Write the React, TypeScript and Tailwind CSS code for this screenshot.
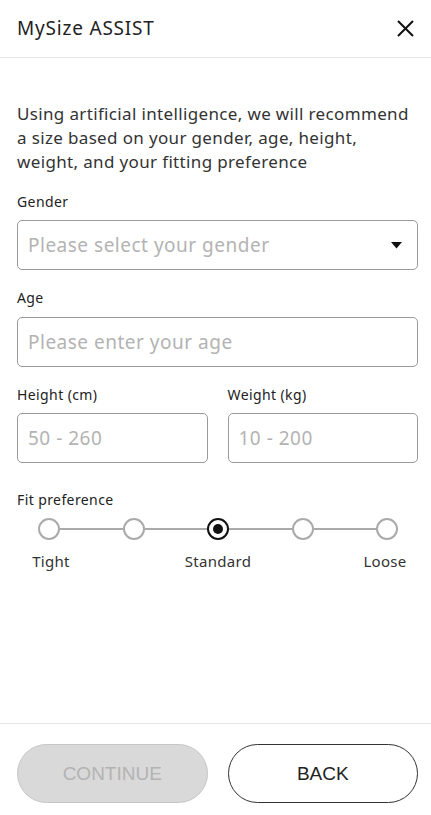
import React from 'react';

const font = { fontFamily: '"Noto Sans", "Liberation Sans", Arial, sans-serif' };
const btnFont = { fontFamily: '"Liberation Sans", Arial, sans-serif' };

const fits = ['Tight', '', 'Standard', '', 'Loose'];

const App = () => {
  const selected = 2;

  return (
    <div className="h-[815px] w-full bg-white flex flex-col text-[#333]" style={font}>
      {/* шапка */}
      <header className="h-[58px] pl-[17px] pr-[17px] flex items-center justify-between border-b border-[#e6e6e6] shrink-0">
        <h1 className="text-[19px] tracking-[0.8px] text-[#222]">MySize ASSIST</h1>
        <button className="w-[17px] h-[17px] flex items-center justify-center">
          <svg width="17" height="17" viewBox="0 0 17 17">
            <path d="M1 1 L16 16 M16 1 L1 16" stroke="#111" strokeWidth="2" />
          </svg>
        </button>
      </header>

      <main className="flex-1 pl-[17px] pr-[13px] pt-[44px]">
        <p className="text-[17px] leading-[24px] tracking-[0.35px] text-[#333]">
          Using artificial intelligence, we will recommend a size based on your gender, age, height, weight, and your fitting preference
        </p>

        <label className="block mt-[18px] text-[14px] tracking-[0.4px] leading-[20px] text-[#222]">Gender</label>
        <div className="mt-[8px] h-[50px] border border-[#9a9a9a] rounded-[5px] pl-[10px] pr-[15px] flex items-center justify-between">
          <span className="text-[19px] tracking-[0.5px] text-[#b3b3b3]">Please select your gender</span>
          <svg width="11" height="7" viewBox="0 0 11 7">
            <path d="M0 0 L11 0 L5.5 6.5 Z" fill="#111" />
          </svg>
        </div>

        <label className="block mt-[18px] text-[14px] tracking-[0.4px] leading-[20px] text-[#222]">Age</label>
        <div className="mt-[9px] h-[50px] border border-[#9a9a9a] rounded-[5px] px-[10px] flex items-center">
          <span className="text-[19px] tracking-[0.5px] text-[#b3b3b3]">Please enter your age</span>
        </div>

        <div className="mt-[18px] grid grid-cols-2 gap-[20px]">
          <div>
            <label className="block text-[14px] tracking-[0.4px] leading-[20px] text-[#222]">Height (cm)</label>
            <div className="mt-[8px] h-[50px] border border-[#9a9a9a] rounded-[5px] px-[10px] flex items-center">
              <span className="text-[19px] tracking-[0.5px] text-[#b3b3b3]">50 - 260</span>
            </div>
          </div>
          <div>
            <label className="block text-[14px] tracking-[0.4px] leading-[20px] text-[#222]">Weight (kg)</label>
            <div className="mt-[8px] h-[50px] border border-[#9a9a9a] rounded-[5px] px-[10px] flex items-center">
              <span className="text-[19px] tracking-[0.5px] text-[#b3b3b3]">10 - 200</span>
            </div>
          </div>
        </div>

        <label className="block mt-[27px] text-[14px] tracking-[0.4px] leading-[20px] text-[#222]">Fit preference</label>
        <div className="mt-[8px] ml-[21px] mr-[20px] flex items-center">
          {fits.map((f, i) => (
            <React.Fragment key={i}>
              {i > 0 && <div className="flex-1 h-[2px] bg-[#aaa]" />}
              {i === selected ? (
                <div className="w-[22px] h-[22px] rounded-full border-2 border-[#111] flex items-center justify-center shrink-0">
                  <div className="w-[10px] h-[10px] rounded-full bg-[#111]" />
                </div>
              ) : (
                <div className="w-[22px] h-[22px] rounded-full border-2 border-[#aaa] bg-white shrink-0" />
              )}
            </React.Fragment>
          ))}
        </div>
        <div className="mt-[11px] ml-[23px] mr-[22px] flex justify-between">
          {fits.map((f, i) => (
            <div key={i} className="w-[22px] flex justify-center">
              <span className="whitespace-nowrap text-[15px] tracking-[0.3px] leading-[20px] text-[#333]">{f}</span>
            </div>
          ))}
        </div>
      </main>

      {/* кнопки */}
      <footer className="shrink-0 border-t border-[#e6e6e6] pl-[17px] pr-[13px] pt-[20px] pb-[12px] grid grid-cols-2 gap-[20px]" style={btnFont}>
        <button disabled className="h-[59px] pt-[2px] rounded-full bg-[#d9d9d9] border border-[#c6c6c6] text-[19px] text-[#b3b3b3]">
          CONTINUE
        </button>
        <button className="h-[59px] pt-[2px] rounded-full bg-white border-[1.5px] border-[#333] text-[19px] text-[#222]">
          BACK
        </button>
      </footer>
    </div>
  );
};

export default App;
